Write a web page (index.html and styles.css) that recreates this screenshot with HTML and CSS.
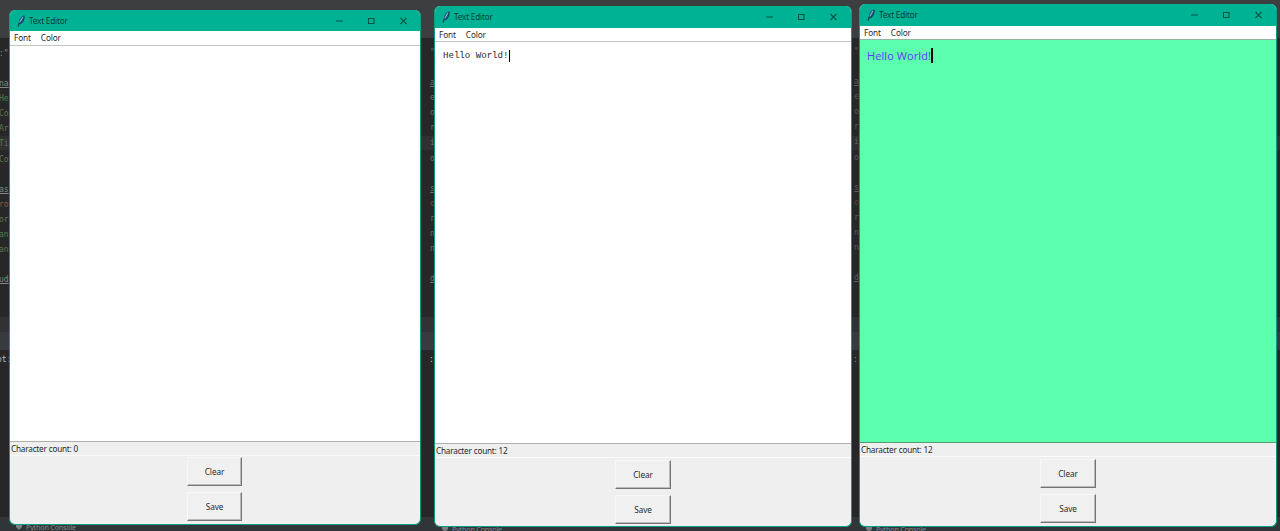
FILE: index.html
```html
<!DOCTYPE html>
<html lang="en">
<head>
<meta charset="utf-8">
<title>Text Editor</title>
<link rel="stylesheet" href="styles.css">
</head>
<body>
<svg class="defs" aria-hidden="true">
  <symbol id="feather" viewBox="0 0 8 12"><path d="M1.2 10.2 1.9 7.5C1.7 4.6 3.4 1.8 7 .3 7.8 3 6.5 7.4 3.2 9z" fill="#23618a"/><path d="M1 11.5 2.4 7.8M3.5 8.7C6.5 6.8 7.4 3 6.9.6" fill="none" stroke="#103948" stroke-width="1.1"/><path d="M2.8 7.2 6 1.8" stroke="#8cbcdc" stroke-width="1"/></symbol>
  <symbol id="controls" viewBox="0 0 72 10"><path d="M0 5h7M32.5 2.5h5.5v5h-5.5zM64.5 2l6 6m0-6-6 6" fill="none" stroke="#075443" stroke-width="1.1"/></symbol>
  <symbol id="console" viewBox="0 0 8 8"><path d="M1 1h6v3L4 7 1 4z" fill="#788084"/></symbol>
</svg>
<main class="desktop">
  <div class="ide"><i class="row-highlight"></i><i class="panel-header"></i><i class="panel-bar"></i><i class="ide-footer"></i></div>
  <pre class="code code-a">:"

<u>na</u>
<b>He</b>
<b>Co</b>
<b>Ar</b>
<b>Ti</b>
<b>Co</b>

<u>as</u>
<em>ro</em>
<b>or</b>
<b>an</b>
<b>an</b>

<u>ud</u>
</pre>
  <pre class="code code-b">"

<u>a</u>
e
o
r
i
o

<u>s</u>
<em>o</em>
r
n
n

<u>d</u>
</pre>
  <pre class="code code-c">"

<u>a</u>
e
o
r
i
o

<u>s</u>
<em>o</em>
r
n
n

<u>d</u>
</pre>
  <span class="out out-a">ot:</span><span class="out out-b">:</span><span class="out out-c">:</span>
  <span class="console console-a"><svg><use href="#console"/></svg>Python Console</span>
  <span class="console console-b"><svg><use href="#console"/></svg>Python Console</span>
  <span class="console console-c"><svg><use href="#console"/></svg>Python Console</span>

  <section class="window first">
    <header class="titlebar"><svg class="feather"><use href="#feather"/></svg><span>Text Editor</span><svg class="controls"><use href="#controls"/></svg></header>
    <nav class="menu"><span>Font</span><span>Color</span></nav>
    <div class="editor"></div>
    <div class="status">Character count: 0</div>
    <div class="actions"><button>Clear</button><button>Save</button></div>
  </section>
  <section class="window second">
    <header class="titlebar"><svg class="feather"><use href="#feather"/></svg><span>Text Editor</span><svg class="controls"><use href="#controls"/></svg></header>
    <nav class="menu"><span>Font</span><span>Color</span></nav>
    <div class="editor"><span class="mono">Hello World!</span><i class="caret"></i></div>
    <div class="status">Character count: 12</div>
    <div class="actions"><button>Clear</button><button>Save</button></div>
  </section>
  <section class="window third">
    <header class="titlebar"><svg class="feather"><use href="#feather"/></svg><span>Text Editor</span><svg class="controls"><use href="#controls"/></svg></header>
    <nav class="menu"><span>Font</span><span>Color</span></nav>
    <div class="editor"><span class="comic">Hello World!</span><i class="caret"></i></div>
    <div class="status">Character count: 12</div>
    <div class="actions"><button>Clear</button><button>Save</button></div>
  </section>
</main>
</body>
</html>
```
FILE: styles.css
```css
* { box-sizing: border-box; }
body { margin: 0; overflow: hidden; }
.defs { position: absolute; width: 0; height: 0; }
.desktop { position: relative; width: 1280px; height: 531px; overflow: hidden; background: #272727; font: 8.2px/12px "Noto Sans", "Open Sans", sans-serif; color: #292929; }

.ide { position: absolute; inset: 0; border-top: 38px solid #3c3e40; }
.ide i { position: absolute; left: 0; width: 100%; }
.row-highlight { top: 98px; height: 14px; background: #303030; }
.panel-header { top: 279px; height: 15px; background: #303234; }
.panel-bar { top: 294px; height: 18px; background: #383b3e; }
.ide-footer { top: 479px; height: 14px; background: #303638; }
.code { position: absolute; margin: 0; font: 8px/15.08px "DejaVu Sans Mono", monospace; color: #858585; }
.code b { font-weight: normal; color: #57774f; }
.code em { font-style: normal; color: #a64b40; }
.code-a { top: 46px; left: -1px; }
.code-b { top: 45px; left: 430px; opacity: .75; }
.code-c { top: 44px; left: 854px; opacity: .55; }
.out { position: absolute; top: 354px; font: 8px/12px "DejaVu Sans Mono", monospace; color: #bbb; }
.out-a { left: -3px; }
.out-b { left: 429px; }
.out-c { left: 853px; opacity: .6; }
.console { position: absolute; display: flex; gap: 3px; align-items: center; font-size: 7.2px; line-height: 10px; letter-spacing: -.2px; color: #82898c; }
.console svg { width: 8px; height: 8px; }
.console-a { left: 15px; top: 522px; }
.console-b { left: 441px; top: 524px; }
.console-c { left: 865px; top: 524px; }

.window { position: absolute; display: flex; flex-direction: column; overflow: hidden; border: 1px solid #0b9c83; border-top: 0; border-radius: 6px; background: #efefef; }
.first { left: 9px; top: 10px; width: 412px; height: 515px; --menu: 15px; --editor: 396px; --button-w: 55px; --button-h: 29px; --controls: 12px; }
.second { left: 434px; top: 6px; width: 418px; height: 521px; --menu: 14px; --editor: 402px; --button-w: 56px; --button-h: 29px; --controls: 13px; }
.third { left: 859px; top: 4px; width: 418px; height: 523px; --menu: 14px; --editor: 403px; --button-w: 56px; --button-h: 29px; --controls: 13px; }
.titlebar { flex: 0 0 21px; display: flex; align-items: center; padding-left: 7px; background: #00b294; color: #073f34; }
.second .titlebar, .third .titlebar { flex-basis: 22px; }
.feather { width: 8px; height: 12px; margin-right: 4px; }
.titlebar span { white-space: nowrap; letter-spacing: -.2px; }
.controls { width: 72px; height: 10px; margin-left: auto; margin-right: var(--controls); }
.menu { flex: 0 0 var(--menu); display: flex; align-items: center; gap: 10px; padding-left: 4px; background: #fff; border-bottom: 1px solid #c4c4c4; letter-spacing: -.1px; }
.third .menu { border-bottom-color: #91b7a3; }
.editor { flex: 0 0 var(--editor); display: flex; align-items: flex-start; padding: 8px 7px 8px 8px; border-bottom: 1px solid #b0b0b0; background: #fff; }
.third .editor { background: #5cffae; border-bottom-color: #579b77; padding-left: 7px; }
.mono { font: 9.1px/12px "Liberation Mono", monospace; white-space: pre; }
.caret { width: 1.5px; height: 12px; background: #000; }
.comic { font: 500 11px/15px "Comic Sans MS", "Open Sans", sans-serif; letter-spacing: .08px; color: #5a3cf0; white-space: pre; }
.third .caret { width: 2px; height: 15px; }
.status { flex: 0 0 14px; padding-left: 1px; border-bottom: 1px solid #fafafa; line-height: 13px; letter-spacing: -.2px; }
.actions { display: flex; flex-direction: column; align-items: center; padding-top: 2px; gap: 6px; }
.first .actions { padding-top: 1px; padding-right: 1px; }
.actions button { width: var(--button-w); height: var(--button-h); padding: 0; font: inherit; letter-spacing: -.1px; color: inherit; background: #f0f0f0; border: 1px solid #f7f7f7; border-right: 1px solid #747474; border-bottom: 1px solid #747474; box-shadow: inset -1px -1px #bbb; }
```
